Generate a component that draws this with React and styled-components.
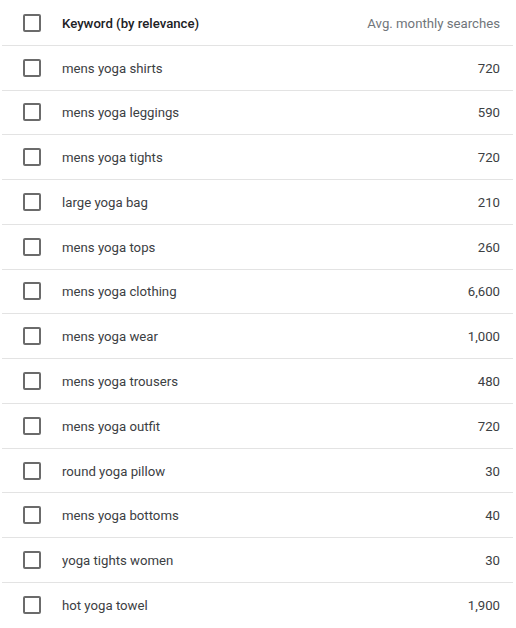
import React from "react";
import styled, { createGlobalStyle } from "styled-components";

const GlobalStyle = createGlobalStyle`
  html, body {
    margin: 0;
    padding: 0;
    background: #ffffff;
  }
  body {
    font-family: Roboto, "Liberation Sans", Arial, sans-serif;
    -webkit-font-smoothing: antialiased;
  }
`;

const rows = [
  { keyword: "mens yoga shirts", searches: "720" },
  { keyword: "mens yoga leggings", searches: "590" },
  { keyword: "mens yoga tights", searches: "720" },
  { keyword: "large yoga bag", searches: "210" },
  { keyword: "mens yoga tops", searches: "260" },
  { keyword: "mens yoga clothing", searches: "6,600" },
  { keyword: "mens yoga wear", searches: "1,000" },
  { keyword: "mens yoga trousers", searches: "480" },
  { keyword: "mens yoga outfit", searches: "720" },
  { keyword: "round yoga pillow", searches: "30" },
  { keyword: "mens yoga bottoms", searches: "40" },
  { keyword: "yoga tights women", searches: "30" },
  { keyword: "hot yoga towel", searches: "1,900" },
];

const Table = styled.div`
  width: 511px;
  margin-left: 2px;
  padding-top: 1px;
  display: flex;
  flex-direction: column;
`;

const Row = styled.div`
  box-sizing: border-box;
  height: 44.77px;
  display: grid;
  grid-template-columns: 60px 1fr auto;
  align-items: center;
  padding-right: 13px;
  border-bottom: ${p => (p.last ? "none" : "1px solid #e3e3e3")};
`;

const CheckCell = styled.div`
  display: flex;
  align-items: center;
  padding-left: 21px;
`;

const Checkbox = styled.div`
  box-sizing: border-box;
  width: 18px;
  height: 18px;
  border: 2px solid #6b6b6b;
  border-radius: 2px;
`;

const Keyword = styled.div`
  font-size: 13.2px;
  color: ${p => (p.head ? "#202124" : "#3c4043")};
  font-weight: ${p => (p.head ? 500 : 400)};
  padding-top: 1px;
`;

const Searches = styled.div`
  font-size: 13.2px;
  text-align: right;
  color: ${p => (p.head ? "#70757a" : "#3c4043")};
  padding-top: 1px;
`;

export default function App() {
  return (
    <>
      <GlobalStyle />
      <Table>
        <Row>
          <CheckCell>
            <Checkbox />
          </CheckCell>
          <Keyword head>Keyword (by relevance)</Keyword>
          <Searches head>Avg. monthly searches</Searches>
        </Row>
        {rows.map((r, i) => (
          <Row key={r.keyword} last={i === rows.length - 1}>
            <CheckCell>
              <Checkbox />
            </CheckCell>
            <Keyword>{r.keyword}</Keyword>
            <Searches>{r.searches}</Searches>
          </Row>
        ))}
      </Table>
    </>
  );
}
